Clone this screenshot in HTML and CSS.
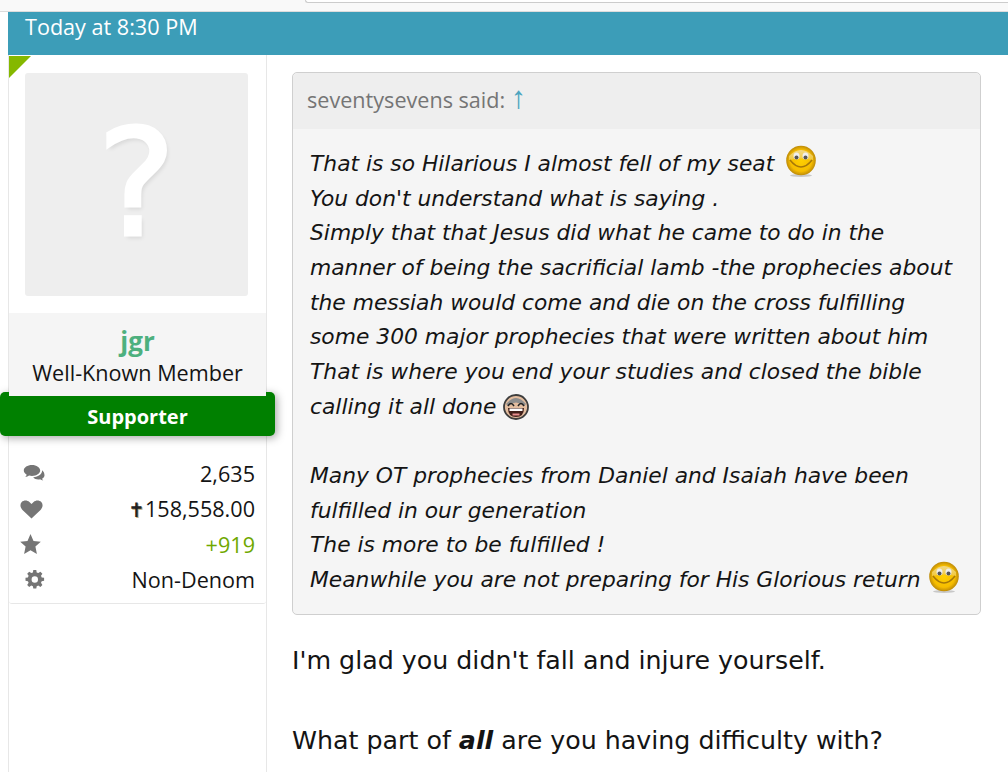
FILE: index.html
```html
<!DOCTYPE html>
<html lang="en">
<head>
<meta charset="utf-8">
<title>Post</title>
<link rel="stylesheet" href="styles.css">
</head>
<body>
<div class="browser-strip"><div class="strip-left"></div><div class="strip-field"></div></div>
<main class="post">
  <header class="post-head">Today at 8:30 PM</header>
  <div class="post-body">
    <aside class="user-col">
      <div class="user-card">
        <span class="corner"></span>
        <div class="avatar-wrap"><div class="avatar">?</div></div>
        <div class="user-info">
          <div class="user-name">jgr</div>
          <div class="user-title">Well-Known Member</div>
        </div>
        <div class="banner">Supporter</div>
        <dl class="stats">
          <div class="stat"><dt><svg class="ico" viewBox="0 0 28 23"><path d="M12 3C7.500 3 3.800 5.400 3.800 8.500c0 1.700 1.100 3.200 2.900 4.200-.3.900-.8 1.700-1.500 2.400 1.500-.2 2.800-.7 3.900-1.500.9.200 1.900.3 2.900.3 4.500 0 8.200-2.400 8.200-5.400S16.500 3 12 3z"/><path d="M22.100 8.300c.4 3.500-3.700 6.700-8.900 7 1 1.400 3 2.200 5.100 2.200.6 0 1.200-.1 1.800-.2.800.6 1.900 1.100 3.100 1.300-.5-.5-.9-1.200-1.100-1.900 1.500-.8 2.400-2.100 2.400-3.500 0-2-1-3.800-2.400-4.900z"/></svg></dt><dd>2,635</dd></div>
          <div class="stat"><dt><svg class="ico" viewBox="0 0 28 23"><path d="M11.500 21.500 2.500 12.900C-.1 10.200-.1 7 1.700 5c2-2 5.500-2.100 7.700 0l2.100 2 2.100-2c2.200-2.100 5.700-2 7.700 0 1.800 2 1.800 5.200-.8 7.900z"/></svg></dt><dd><span class="cross">✝</span>158,558.00</dd></div>
          <div class="stat"><dt><svg class="ico" viewBox="0 0 28 23"><path d="m10.500 1 3 6.900 7.300.8-5.400 4.900 1.500 7.400-6.400-3.700-6.400 3.700 1.500-7.400L.2 8.700l7.300-.8z"/></svg></dt><dd class="positive">+919</dd></div>
          <div class="stat"><dt><svg class="ico" viewBox="0 0 28 23"><path fill-rule="evenodd" d="M13.300 2h3l.4 2.400 1.600.7 2.100-1.400 2 2-1.400 2.100.7 1.600 2.400.4v3l-2.400.4-.7 1.600 1.400 2.100-2 2-2.100-1.400-1.600.7-.4 2.400h-3l-.4-2.400-1.600-.7-2.100 1.400-2-2 1.400-2.100-.7-1.600-2.400-.4v-3l2.400-.4.7-1.600-1.400-2.100 2-2 2.100 1.400 1.600-.7zm1.500 6.300a3.200 3.200 0 1 0 0 6.400 3.200 3.200 0 0 0 0-6.400z"/></svg></dt><dd>Non-Denom</dd></div>
        </dl>
      </div>
    </aside>
    <article class="content">
      <blockquote class="quote">
        <div class="quote-head">seventysevens said: <span class="quote-arrow">↑</span></div>
        <div class="quote-body">
          <div class="q-line">That is so Hilarious I almost fell of my seat <svg class="smile smile-wide" viewBox="0 0 32 32"><use href="#smiley"/></svg></div>
          <div class="q-line">You don't understand what is saying .</div>
          <div class="q-line">Simply that that Jesus did what he came to do in the</div>
          <div class="q-line">manner of being the sacrificial lamb -the prophecies about</div>
          <div class="q-line">the messiah would come and die on the cross fulfilling</div>
          <div class="q-line">some 300 major prophecies that were written about him</div>
          <div class="q-line">That is where you end your studies and closed the bible</div>
          <div class="q-line">calling it all done <svg class="laugh" viewBox="0 0 26 26"><circle cx="13" cy="13" r="12" fill="#e3bd9f" stroke="#3d3d3d" stroke-width="1.800"/><path d="M3 10Q13-2 23 10L21 12Q13 5 5 12z" fill="#8d8d8d"/><path d="M5 12q3-5 6 0M15 12q3-5 6 0" fill="none" stroke="#222" stroke-width="1.500"/><path d="M5 14h16q0 9-8 9t-8-9z" fill="#41201a"/><path d="M6.500 14.500h13v2.500h-13z" fill="#fff"/><path d="M9.500 19.500h7v2h-7z" fill="#e98f8f"/></svg></div>
          <div class="q-line">&nbsp;</div>
          <div class="q-line">Many OT prophecies from Daniel and Isaiah have been</div>
          <div class="q-line">fulfilled in our generation</div>
          <div class="q-line">The is more to be fulfilled !</div>
          <div class="q-line">Meanwhile you are not preparing for His Glorious return <svg class="smile" viewBox="0 0 32 32"><use href="#smiley"/></svg></div>
        </div>
      </blockquote>
      <p class="reply">I'm glad you didn't fall and injure yourself.</p>
      <p class="reply">What part of <b><i>all</i></b> are you having difficulty with?</p>
    </article>
  </div>
</main>
<svg class="defs" aria-hidden="true">
  <defs>
    <radialGradient id="sm" cx="50%" cy="50%" r="52%"><stop offset="0" stop-color="#ffd000"/><stop offset=".7" stop-color="#f6bd00"/><stop offset="1" stop-color="#b58309"/></radialGradient>
    <linearGradient id="smtop" x1="0" y1="0" x2="0" y2="1"><stop offset="0" stop-color="#eedca0"/><stop offset="1" stop-color="#f2cb45"/></linearGradient>
    <symbol id="smiley" viewBox="0 0 32 32">
      <ellipse cx="16" cy="30.500" rx="11" ry="1.500" fill="#c8c8c8"/>
      <circle cx="16" cy="15.500" r="14.800" fill="url(#sm)"/>
      <path d="M4 15V11Q16 -1 28 11V15Q16 12 4 15z" fill="url(#smtop)" opacity=".85"/>
      <ellipse cx="11.500" cy="11" rx="3" ry="3.500" fill="#eee"/><ellipse cx="20.500" cy="11" rx="3" ry="3.500" fill="#eee"/>
      <ellipse cx="11.500" cy="12.500" rx="2" ry="2" fill="#555"/><ellipse cx="20.500" cy="12.500" rx="2" ry="2" fill="#555"/>
      <path d="M5 15Q16 29 27 15" fill="none" stroke="#a67808" stroke-width="1.500"/>
    </symbol>
  </defs>
</svg>
</body>
</html>
```
FILE: styles.css
```css
* { box-sizing: border-box; }
html, body { margin: 0; padding: 0; height: 772px; overflow: hidden; background: #fff; }
body { font-family: "Open Sans", sans-serif; color: #141414; }
.browser-strip { height: 12px; background: #f9f9f9; border-bottom: 1px solid #dcdcdc; display: flex; }
.strip-left { width: 305px; }
.strip-field { width: 703px; height: 3px; background: #fff; border-left: 1px solid #ccc; border-bottom: 1px solid #ccc; border-bottom-left-radius: 4px; }
.post { margin-left: 8px; border-left: 1px solid #e7e7e7; height: 760px; }
.post-head { margin-left: -1px; height: 43px; background: #3c9db8; color: #fff; font-size: 21.600px; line-height: 30px; padding-left: 17px; }
.post-body { display: flex; height: 717px; }
.user-col { width: 258px; flex: none; border-right: 1px solid #e7e7e7; }
.user-card { position: relative; height: 549px; border-bottom: 1px solid #e7e7e7; border-radius: 0 0 3px 3px; display: flex; flex-direction: column; }
.corner { position: absolute; left: 0; top: 1px; width: 0; height: 0; border-top: 22px solid #85b800; border-right: 22px solid transparent; }
.avatar-wrap { padding: 18px 16px 17px; }
.avatar { width: 223px; height: 223px; background: #eee; border-radius: 3px; color: #fff; font-family: "DejaVu Sans", sans-serif; font-size: 148px; line-height: 222px; text-align: center; -webkit-text-stroke: 3px #fff; text-shadow: 2px 3px 4px rgba(0,0,0,.1); }
.user-info { position: relative; z-index: 1; height: 83px; background: #f5f5f5; text-align: center; padding-top: 12px; }
.user-name { font-size: 26px; line-height: 32px; font-weight: 700; color: #4db07e; }
.user-title { font-size: 21.600px; line-height: 32px; }
.banner { position: relative; margin: -4px -9px 0; width: 275px; height: 44px; background: #008000; color: #fff; font-weight: 700; font-size: 20px; line-height: 50px; text-align: center; border-radius: 5px; box-shadow: 2px 2px 8px rgba(0,0,0,.35); }
.stats { margin: 19.300px 0 0; padding: 0 11px 0 11px; }
.stat { display: flex; justify-content: space-between; align-items: center; height: 35.500px; }
.stat dt { display: block; }
.stat dd { margin: 0; font-size: 21.600px; }
.ico { display: block; width: 28px; height: 23px; fill: #757575; }
.cross { color: #222; font-family: "DejaVu Sans", sans-serif; font-size: 20px; text-shadow: 1px 1px 0 #bcae84; }
.positive { color: #6fa800; }
.content { flex: 1; padding: 17px 27px 0 25px; }
.quote { margin: 0; border: 1px solid #cfcfcf; border-radius: 5px; background: #f5f5f5; height: 543px; }
.quote-head { height: 56px; background: #eee; color: #757575; font-size: 21.600px; line-height: 54px; padding-left: 14px; border-radius: 5px 5px 0 0; }
.quote-arrow { color: #4ca5bf; font-family: "Liberation Sans", sans-serif; font-size: 31px; line-height: 1; }
.quote-body { padding-top: 18px; padding-left: 17px; font-family: "DejaVu Sans", sans-serif; font-style: italic; font-size: 21.800px; line-height: 34.670px; white-space: nowrap; }
.q-line { height: 34.670px; }
.smile { width: 32px; height: 32px; margin: -12px 0 0 0; vertical-align: -6px; }
.smile-wide { margin-left: 4px; }
.laugh { width: 26px; height: 26px; margin-top: -8px; vertical-align: -6px; }
.reply { margin: 0; font-family: "DejaVu Sans", sans-serif; font-size: 25.300px; line-height: 40px; height: 80px; }
.reply:first-of-type { margin-top: 26px; }
.defs { position: absolute; width: 0; height: 0; }
```
